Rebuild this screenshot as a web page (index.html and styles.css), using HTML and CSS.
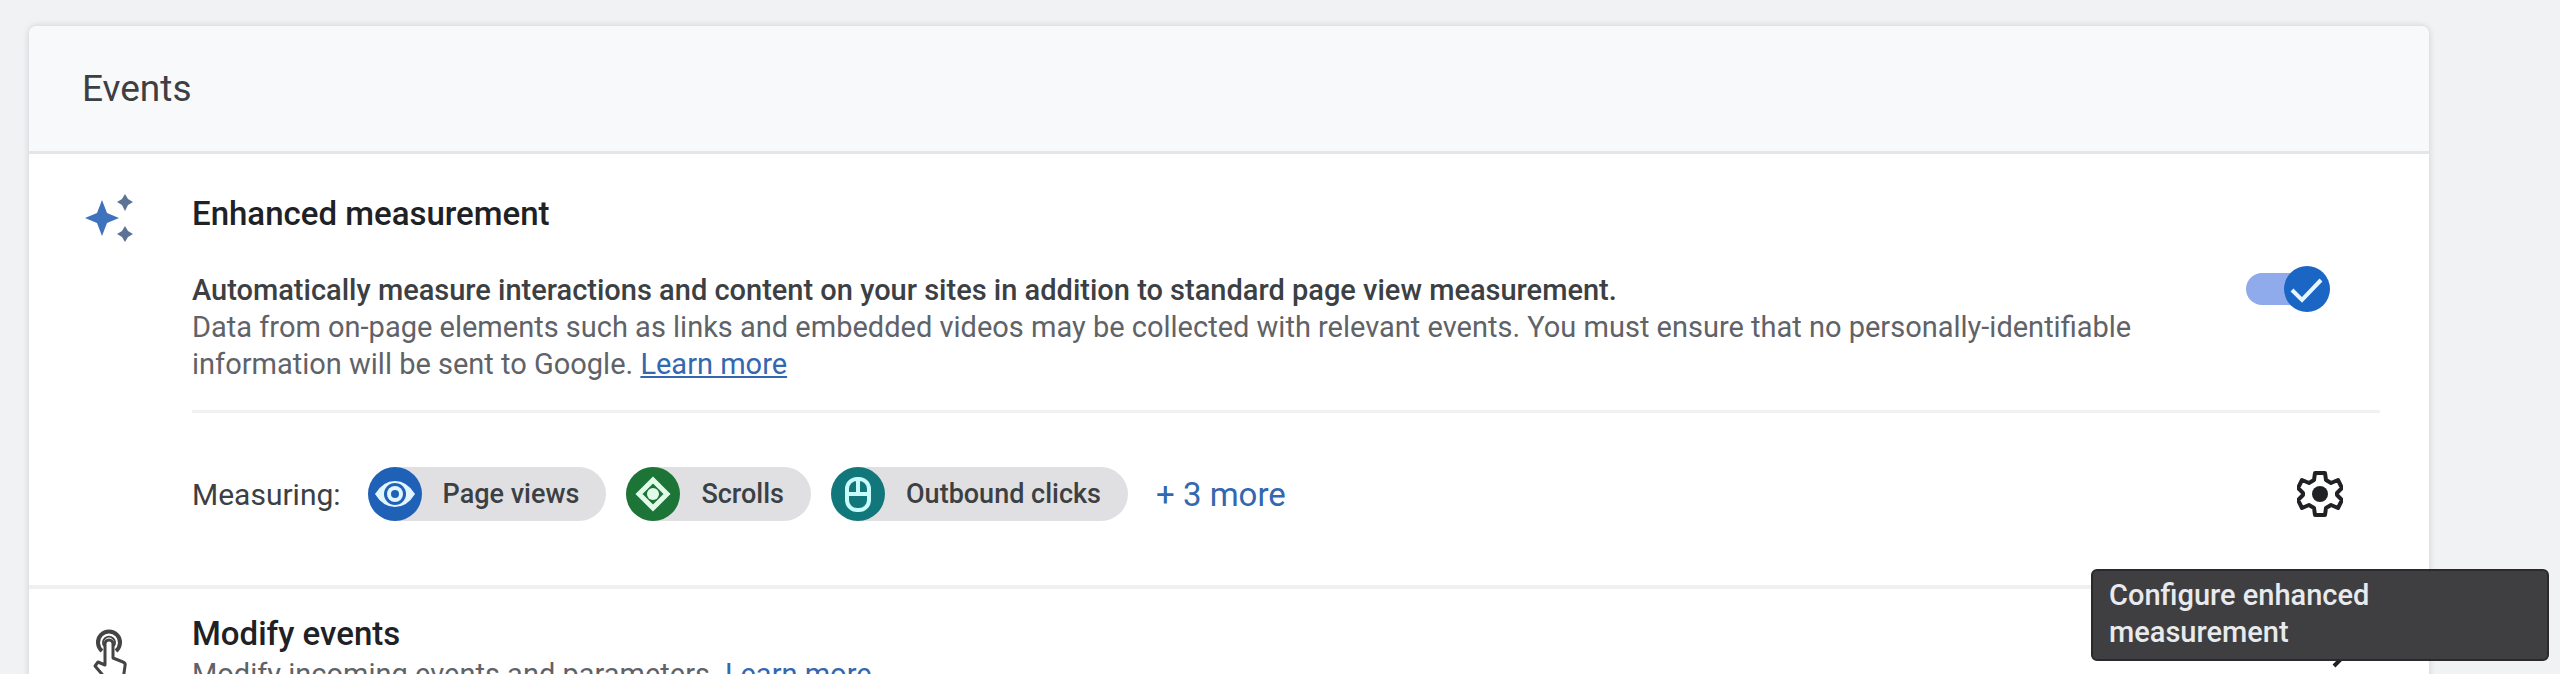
FILE: index.html
```html
<!DOCTYPE html>
<html lang="en">
<head>
    <meta charset="UTF-8">
    <meta name="viewport" content="width=device-width, initial-scale=1.0">
    <title>Events</title>
    <link rel="stylesheet" href="styles.css">
</head>
<body>

<main class="card">
    <header class="card-header">
        <h1>Events</h1>
    </header>

    <section class="row enhanced">
        <svg class="row-icon" viewBox="0 0 56 56" aria-hidden="true">
            <path fill="#3f72bd" d="M20 6l5 13 12 5-12 5-5 13-5-13-12-5 12-5z"/>
            <path fill="#5c7396" d="M43 0l3 5 5 3-5 3-3 6-3-6-5-3 5-3zM43 32l3 5 5 3-5 3-3 5-3-5-5-3 5-3z"/>
        </svg>
        <div class="row-body">
            <div class="info">
                <div class="info-text">
                    <h2 id="enhanced-title">Enhanced measurement</h2>
                    <p class="description">
                        <strong>Automatically measure interactions and content on your sites in addition to standard page view measurement.</strong><br>
                        Data from on-page elements such as links and embedded videos may be collected with relevant events. You must ensure that no personally-identifiable information will be sent to Google. <a href="#">Learn more</a>
                    </p>
                </div>
                <label class="toggle">
                    <input type="checkbox" checked aria-labelledby="enhanced-title">
                    <svg class="knob" viewBox="0 0 46 46" aria-hidden="true">
                        <circle cx="23" cy="23" r="23" fill="#1b66c5"/>
                        <path d="M8 24l10 10 19-20" fill="none" stroke="#e4f6ff" stroke-width="4"/>
                    </svg>
                </label>
            </div>

            <div class="measuring">
                <span class="measuring-label">Measuring:</span>
                <ul class="chips">
                    <li class="chip">
                        <svg viewBox="0 0 54 54" aria-hidden="true">
                            <circle cx="27" cy="27" r="27" fill="#2061b8"/>
                            <path d="M7 27q8-13 20-13t20 13q-8 13-20 13T7 27z" fill="#e3f5ff"/>
                            <circle cx="27" cy="27" r="11" fill="#2061b8"/>
                            <circle cx="27" cy="27" r="8" fill="#e3f5ff"/>
                            <circle cx="27" cy="27" r="4" fill="#2061b8"/>
                        </svg>
                        Page views
                    </li>
                    <li class="chip">
                        <svg viewBox="0 0 54 54" aria-hidden="true">
                            <circle cx="27" cy="27" r="27" fill="#1c7437"/>
                            <path d="M27 13l14 14-14 14-14-14z" fill="none" stroke="#e2fbe9" stroke-width="5"/>
                            <circle cx="27" cy="27" r="6" fill="#e2fbe9"/>
                        </svg>
                        Scrolls
                    </li>
                    <li class="chip">
                        <svg viewBox="0 0 54 54" aria-hidden="true">
                            <circle cx="27" cy="27" r="27" fill="#12777b"/>
                            <rect x="16" y="12" width="22" height="31" rx="10" fill="none" stroke="#c8fbfb" stroke-width="4"/>
                            <path d="M16 27h22M27 12v15" fill="none" stroke="#c8fbfb" stroke-width="4"/>
                        </svg>
                        Outbound clicks
                    </li>
                </ul>
                <a class="more" href="#">+ 3 more</a>

                <div class="settings">
                    <button type="button" aria-label="Settings" aria-describedby="settings-tip">
                        <svg viewBox="0 0 46 46" aria-hidden="true">
                            <path d="M18 2h10l1 7 5 3 7-3 4 8-5 5v2l5 5-4 8-7-3-5 3-1 7H18l-1-7-5-3-7 3-4-8 5-5v-2l-5-5 4-8 7 3 5-3z" fill="none" stroke="#202124" stroke-width="4" stroke-linejoin="round"/>
                            <circle cx="23" cy="23" r="8" fill="#202124"/>
                        </svg>
                    </button>
                    <div class="tooltip" id="settings-tip" role="tooltip">Configure enhanced measurement</div>
                </div>
            </div>
        </div>
    </section>

    <section class="row modify">
        <svg class="row-icon" viewBox="0 0 56 64" aria-hidden="true">
            <g fill="none" stroke="#444" stroke-width="4" stroke-linejoin="round">
                <path d="M20 25a11 11 0 1 1 14 0"/>
                <path d="M23 18a4 4 0 1 1 8 0v14l10 4q3 1 2 4l-2 14H25L13 40l3-4 7 3z" stroke-width="3"/>
                <path d="M22 20a6 6 0 1 1 10 0" stroke-width="2"/>
            </g>
        </svg>
        <div class="row-body modify-body">
            <div>
                <h2>Modify events</h2>
                <p class="description">Modify incoming events and parameters. <a href="#">Learn more</a></p>
            </div>
            <svg class="chevron" viewBox="0 0 24 24" aria-hidden="true">
                <path d="M9 6l6 6-6 6" fill="none" stroke="#202124" stroke-width="2"/>
            </svg>
        </div>
    </section>
</main>

</body>
</html>
```
FILE: styles.css
```css
* {
    box-sizing: border-box;
}

body {
    margin: 0;
    padding: 26px 131px 0 29px;
    background: #f0f2f4;
    color: #202124;
    font-family: Roboto, sans-serif;
    font-size: 29px;
    line-height: 37px;
    overflow: hidden;
}

h1,
h2,
p,
ul {
    margin: 0;
    padding: 0;
}

a {
    color: #3367b0;
}

.card {
    background: white;
    border-radius: 8px;
    box-shadow: 0 0 6px rgba(60, 64, 67, 0.2);
}

.card-header {
    padding: 40px 53px;
    background: #f8f9fb;
    border-bottom: 3px solid #e4e6e9;
    border-radius: 8px 8px 0 0;
}

.card-header h1 {
    font-size: 37px;
    font-weight: 400;
    line-height: 45px;
    color: #3c4043;
}

.row {
    display: grid;
    grid-template-columns: 110px 1fr;
    padding: 40px 49px 0 53px;
}

.row h2 {
    font-size: 33px;
    font-weight: 500;
    line-height: 40px;
}

.row-icon {
    width: 56px;
}

/* enhanced measurement */

.enhanced {
    border-bottom: 4px solid #f0f0f1;
}

.info {
    display: flex;
    align-items: center;
    justify-content: space-between;
    padding-bottom: 27px;
    border-bottom: 3px solid #f1f1f1;
}

.info-text {
    max-width: 2000px;
}

.info .description {
    margin-top: 38px;
}

.description {
    color: #5f6368;
}

.description strong {
    font-weight: 500;
    color: #3c4043;
}

.toggle {
    position: relative;
    display: flex;
    align-items: center;
    width: 84px;
    height: 46px;
    margin-right: 50px;
    cursor: pointer;
}

.toggle input {
    appearance: none;
    width: 72px;
    height: 32px;
    margin: 0;
    border-radius: 16px;
    background: #8fabec;
}

.toggle .knob {
    position: absolute;
    right: 0;
    width: 46px;
}

.measuring {
    display: flex;
    align-items: center;
    padding: 54px 0 64px;
}

.measuring-label {
    color: #3c4043;
    font-size: 30px;
}

.chips {
    display: flex;
    gap: 20px;
    margin-left: 27px;
    list-style: none;
}

.chip {
    display: flex;
    align-items: center;
    gap: 21px;
    padding-right: 27px;
    border-radius: 27px;
    background: #e0e0e3;
    color: #3c4043;
    font-size: 27px;
    font-weight: 500;
}

.chip svg {
    width: 54px;
    height: 54px;
}

.more {
    margin-left: 28px;
    font-size: 33px;
    text-decoration: none;
}

.settings {
    position: relative;
    height: 54px;
    margin-left: auto;
    margin-right: 12px;
}

.settings button {
    display: flex;
    align-items: center;
    justify-content: center;
    width: 96px;
    height: 54px;
    padding: 0;
    border: none;
    background: none;
    cursor: pointer;
}

.settings svg {
    width: 46px;
}

.tooltip {
    position: absolute;
    top: 102px;
    left: 50%;
    z-index: 1;
    width: 458px;
    padding: 6px 16px 8px;
    transform: translateX(-50%);
    border: 2px solid #2a2a2c;
    border-radius: 6px;
    background: #3f3f41;
    color: #e8eaed;
    font-weight: 500;
}

/* modify events */

.modify {
    padding-top: 25px;
    padding-bottom: 40px;
}

.modify .row-icon {
    margin-top: 12px;
}

.modify-body {
    display: flex;
    align-items: center;
    justify-content: space-between;
}

.modify .description {
    margin-top: 2px;
}

.chevron {
    width: 48px;
    margin-right: 16px;
}
```
